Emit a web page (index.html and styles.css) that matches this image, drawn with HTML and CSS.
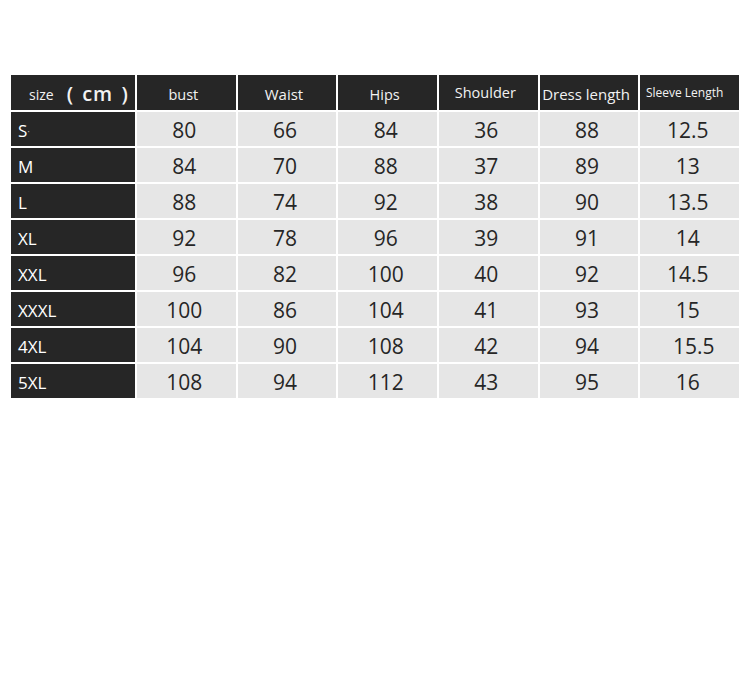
FILE: index.html
```html
<!DOCTYPE html>
<html>
<head>
<meta charset="utf-8">
<link rel="stylesheet" href="styles.css">
</head>
<body>
<div class="chart">
  <div class="cell head first"><span class="size">size</span><span class="unit">( cm )</span></div>
  <div class="cell head"><span class="h14">bust</span></div>
  <div class="cell head"><span class="h15">Waist</span></div>
  <div class="cell head"><span class="h14">Hips</span></div>
  <div class="cell head"><span class="h14 up">Shoulder</span></div>
  <div class="cell head"><span class="h15">Dress length</span></div>
  <div class="cell head"><span class="h12 up">Sleeve Length</span></div>

  <div class="cell label">S<span class="dot">·</span></div>
  <div class="cell num">80</div><div class="cell num">66</div><div class="cell num">84</div><div class="cell num">36</div><div class="cell num">88</div><div class="cell num">12.5</div>

  <div class="cell label">M</div>
  <div class="cell num">84</div><div class="cell num">70</div><div class="cell num">88</div><div class="cell num">37</div><div class="cell num">89</div><div class="cell num">13</div>

  <div class="cell label">L</div>
  <div class="cell num">88</div><div class="cell num">74</div><div class="cell num">92</div><div class="cell num">38</div><div class="cell num">90</div><div class="cell num">13.5</div>

  <div class="cell label">XL</div>
  <div class="cell num">92</div><div class="cell num">78</div><div class="cell num">96</div><div class="cell num">39</div><div class="cell num">91</div><div class="cell num">14</div>

  <div class="cell label">XXL</div>
  <div class="cell num">96</div><div class="cell num">82</div><div class="cell num">100</div><div class="cell num">40</div><div class="cell num">92</div><div class="cell num">14.5</div>

  <div class="cell label">XXXL</div>
  <div class="cell num">100</div><div class="cell num">86</div><div class="cell num">104</div><div class="cell num">41</div><div class="cell num">93</div><div class="cell num">15</div>

  <div class="cell label">4XL</div>
  <div class="cell num">104</div><div class="cell num">90</div><div class="cell num">108</div><div class="cell num">42</div><div class="cell num">94</div><div class="cell num shift">15.5</div>

  <div class="cell label">5XL</div>
  <div class="cell num">108</div><div class="cell num">94</div><div class="cell num">112</div><div class="cell num">43</div><div class="cell num">95</div><div class="cell num">16</div>
</div>
</body>
</html>
```

FILE: styles.css
```css
html, body {
  margin: 0;
  padding: 0;
  background: #ffffff;
}

body {
  width: 750px;
  height: 691px;
  overflow: hidden;
  font-family: "Open Sans", "Noto Sans", sans-serif;
}

.chart {
  margin: 75px 0 0 11px;
  width: 728px;
  display: grid;
  grid-template-columns: 124px repeat(6, 1fr);
  grid-template-rows: 35px;
  grid-auto-rows: 34px;
  column-gap: 2px;
  row-gap: 2px;
}

.cell {
  display: flex;
  align-items: center;
  justify-content: center;
  box-sizing: border-box;
}

.head {
  background: #262626;
  color: #f2f2f2;
  padding-top: 3px;
  padding-right: 6px;
}

.head.first {
  justify-content: flex-start;
  padding-left: 18px;
  padding-right: 0;
  padding-top: 1px;
}

.size {
  font-size: 14px;
  margin-right: 13px;
  padding-top: 2px;
}

.unit {
  font-size: 20px;
  font-weight: 600;
  letter-spacing: 1px;
  word-spacing: 2px;
}

.h14 {
  font-size: 14.5px;
}

.h15 {
  font-size: 15px;
}

.h12 {
  font-size: 12px;
  margin-right: 4px;
}

.up {
  margin-top: -3px;
}

.label {
  background: #262626;
  color: #ffffff;
  font-size: 17px;
  justify-content: flex-start;
  padding-left: 7px;
  padding-top: 3px;
}

.dot {
  font-size: 10px;
  color: #aaaaaa;
}

.num {
  background: #e6e6e6;
  color: #262626;
  font-size: 21px;
  padding-top: 2px;
  padding-right: 4px;
}

.shift {
  padding-left: 8px;
  padding-right: 0;
}
```
